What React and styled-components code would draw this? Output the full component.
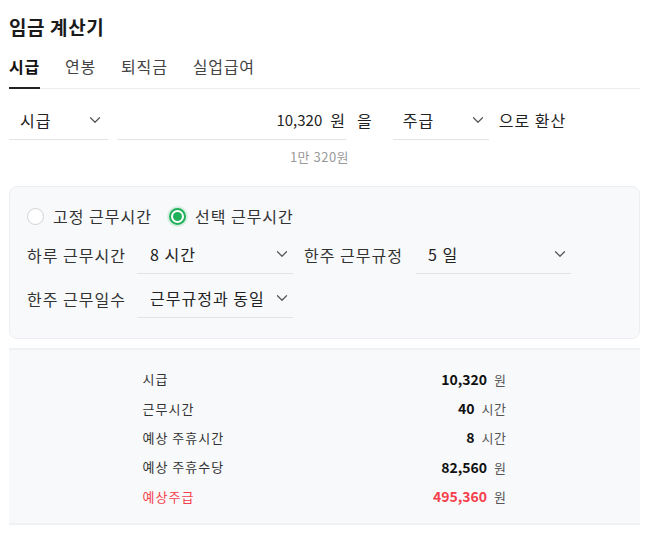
import React from "react";
import styled, { createGlobalStyle } from "styled-components";
import { ChevronDown } from "lucide-react";

const Global = createGlobalStyle`
  html, body { margin: 0; padding: 0; background: #fff; }
  body { font-family: "Noto Sans CJK KR", "Noto Sans", sans-serif; color: #222; }
  * { box-sizing: border-box; }
`;

const Page = styled.div`
  width: 648px;
  padding: 13px 8px 0 9px;
`;

const Title = styled.h1`
  margin: 0;
  font-size: 19px;
  letter-spacing: 0.6px;
  line-height: 28px;
  font-weight: 700;
  color: #1a1a1a;
`;

const Tabs = styled.div`
  display: flex;
  gap: 25px;
  margin-top: 6px;
  border-bottom: 1px solid #ececec;
`;

const Tab = styled.div`
  font-size: 16px;
  letter-spacing: 0.8px;
  line-height: 22px;
  padding: 8px 0 10px;
  margin-bottom: -1px;
  color: ${p => (p.$active ? "#111" : "#444")};
  font-weight: ${p => (p.$active ? 700 : 400)};
  border-bottom: 2px solid ${p => (p.$active ? "#222" : "transparent")};
`;

const ConvertRow = styled.div`
  display: flex;
  align-items: stretch;
  height: 40px;
  margin-top: 11px;
  font-size: 16px;
  letter-spacing: 1px;
  color: #222;
`;

const Select = styled.div`
  display: flex;
  align-items: center;
  justify-content: space-between;
  width: ${p => p.$w}px;
  padding: 0 ${p => p.$pr ?? 4}px 0 ${p => p.$pl ?? 11}px;
  border-bottom: 1px solid #e3e3e3;
  font-size: 16px;
  letter-spacing: 1px;
  color: #222;
  flex-shrink: 0;
  svg { color: #555; }
`;

const Num = styled.span`
  font-size: 15px;
  letter-spacing: 0;
`;

const AmountBox = styled.div`
  display: flex;
  align-items: center;
  justify-content: flex-end;
  width: 229px;
  margin-left: 9px;
  border-bottom: 1px solid #e3e3e3;
  gap: 8px;
`;

const Plain = styled.span`
  display: flex;
  align-items: center;
  margin: 0 ${p => p.$mr ?? 0}px 0 ${p => p.$ml ?? 0}px;
`;

const Hint = styled.div`
  text-align: center;
  margin-top: 8px;
  font-size: 13px;
  letter-spacing: 0.5px;
  line-height: 18px;
  color: #9a9a9a;
  transform: translateX(-5px);
`;

const Panel = styled.div`
  margin-top: 20px;
  background: #f8f9fb;
  border: 1px solid #eceef1;
  border-radius: 8px;
  padding: 19px 17px 20px;
  font-size: 16px;
  letter-spacing: 1px;
  color: #333;
`;

const RadioRow = styled.div`
  display: flex;
  align-items: center;
  height: 20px;
  gap: 17px;
`;

const RadioLabel = styled.label`
  display: flex;
  align-items: center;
  gap: 9px;
  color: #333;
`;

const RadioDot = styled.span`
  width: 17px;
  height: 17px;
  border-radius: 50%;
  border: ${p => (p.$on ? "2px solid #1fb05a" : "1px solid #cfd2d6")};
  background: #fff;
  display: flex;
  align-items: center;
  justify-content: center;
  box-shadow: ${p => (p.$on ? "0 0 0 2px rgba(31,176,90,0.15)" : "none")};
  &::after {
    content: "";
    display: ${p => (p.$on ? "block" : "none")};
    width: 9px;
    height: 9px;
    border-radius: 50%;
    background: #1fb05a;
  }
`;

const FieldRow = styled.div`
  display: flex;
  align-items: stretch;
  height: 39px;
  margin-top: ${p => p.$mt}px;
`;

const FieldLabel = styled.div`
  display: flex;
  align-items: center;
  width: ${p => p.$w}px;
  margin-left: ${p => p.$ml ?? 0}px;
  color: #333;
  flex-shrink: 0;
`;

const Result = styled.div`
  margin-top: 9px;
  background: #f8f9fb;
  border-top: 2px solid #f0f1f3;
  border-bottom: 2px solid #f0f1f3;
  padding: 14px 0 12px;
`;

const ResultInner = styled.div`
  width: 364px;
  margin: 0 auto;
`;

const ResultRow = styled.div`
  display: flex;
  align-items: center;
  justify-content: space-between;
  height: 29.4px;
  font-size: 13px;
  letter-spacing: 1px;
  color: ${p => (p.$red ? "#f5404b" : "#333")};
`;

const Value = styled.span`
  display: flex;
  align-items: baseline;
  gap: 7px;
  letter-spacing: 0;
  b {
    font-size: 14px;
    font-weight: 700;
    color: ${p => (p.$red ? "#f5404b" : "#111")};
  }
  span { font-size: 13px; color: #555; letter-spacing: 0.5px; }
`;

const Chev = () => <ChevronDown size={18} strokeWidth={1.6} />;

const results = [
  ["시급", "10,320", "원"],
  ["근무시간", "40", "시간"],
  ["예상 주휴시간", "8", "시간"],
  ["예상 주휴수당", "82,560", "원"],
  ["예상주급", "495,360", "원", true],
];

export default function App() {
  return (
    <Page>
      <Global />
      <Title>임금 계산기</Title>
      <Tabs>
        <Tab $active>시급</Tab>
        <Tab>연봉</Tab>
        <Tab>퇴직금</Tab>
        <Tab>실업급여</Tab>
      </Tabs>

      <ConvertRow>
        <Select $w={99}>
          <span>시급</span>
          <Chev />
        </Select>
        <AmountBox>
          <Num>10,320</Num>
          <span>원</span>
        </AmountBox>
        <Plain $ml={11}>을</Plain>
        <Select $w={96} $pl={10} $pr={2} style={{ marginLeft: 20 }}>
          <span>주급</span>
          <Chev />
        </Select>
        <Plain $ml={10}>으로 환산</Plain>
      </ConvertRow>
      <Hint>1만 320원</Hint>

      <Panel>
        <RadioRow>
          <RadioLabel>
            <RadioDot />
            고정 근무시간
          </RadioLabel>
          <RadioLabel>
            <RadioDot $on />
            선택 근무시간
          </RadioLabel>
        </RadioRow>
        <FieldRow $mt={9}>
          <FieldLabel $w={110}>하루 근무시간</FieldLabel>
          <Select $w={156} $pl={13} $pr={2}>
            <span>8 시간</span>
            <Chev />
          </Select>
          <FieldLabel $w={112} $ml={11}>한주 근무규정</FieldLabel>
          <Select $w={155} $pl={12} $pr={2}>
            <span>5 일</span>
            <Chev />
          </Select>
        </FieldRow>
        <FieldRow $mt={5}>
          <FieldLabel $w={110}>한주 근무일수</FieldLabel>
          <Select $w={156} $pl={13} $pr={2}>
            <span>근무규정과 동일</span>
            <Chev />
          </Select>
        </FieldRow>
      </Panel>

      <Result>
        <ResultInner>
          {results.map(([k, v, u, red]) => (
            <ResultRow key={k} $red={red}>
              <span>{k}</span>
              <Value $red={red}>
                <b>{v}</b>
                <span>{u}</span>
              </Value>
            </ResultRow>
          ))}
        </ResultInner>
      </Result>
    </Page>
  );
}
